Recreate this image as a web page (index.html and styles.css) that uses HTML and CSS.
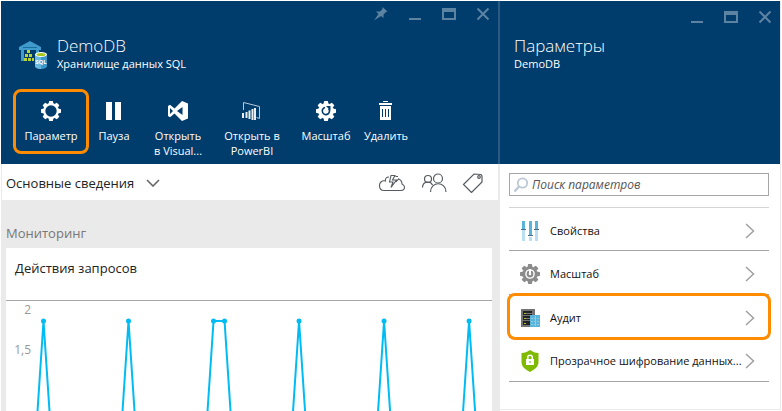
FILE: index.html
```html
<!DOCTYPE html>
<html lang="ru">
<head>
<meta charset="utf-8">
<title>DemoDB</title>
<link rel="stylesheet" href="styles.css">
</head>
<body>
<main class="portal">
  <section class="blade blade-main">
    <header class="blade-header">
      <div class="window-controls">
        <button type="button" aria-label="Закрепить"><svg width="14" height="14" viewBox="0 0 14 14"><path fill="currentColor" d="M8.500 0 13.500 4.500 12 5 9.500 7.500 9.500 11 7 9 0 13.500 4.500 7 2 4.500 6 4.500 8.500 2z"/></svg></button>
        <button type="button" aria-label="Свернуть"><svg width="14" height="14" viewBox="0 0 14 14"><path fill="currentColor" d="M1 11h12v2H1z"/></svg></button>
        <button type="button" aria-label="Развернуть"><svg width="14" height="14" viewBox="0 0 14 14"><path fill="currentColor" fill-rule="evenodd" d="M0 1h14v12H0zM2 5v6h10V5z"/></svg></button>
        <button type="button" aria-label="Закрыть"><svg width="14" height="14" viewBox="0 0 14 14"><path stroke="currentColor" stroke-width="2" d="M1.500 1.500l11 11m0-11l-11 11"/></svg></button>
      </div>
      <div class="heading">
        <svg class="heading-icon" width="30" height="30" viewBox="0 0 30 30">
          <path fill="#3e9bcb" d="M1 7 12 1 23 7v3H1z"/>
          <path fill="#3e9bcb" d="M3 9h3v12H3zM18 9h3v4h-3z"/>
          <path fill="#1b6fa0" d="M5 7h14v1H5z"/>
          <path fill="#b8d432" d="M9 10h3v3H9zM7 14h3v3H7zM11 14h3v3h-3zM6 18h3v3H6zM10 18h3v3h-3zM14 18h2v3h-2z"/>
          <path fill="#3b98c9" d="M17 14v12c0 4 12 4 12 0V14z"/>
          <path fill="#6bb8de" d="M17 15v11c0 2 3 3 6 3V17z"/>
          <ellipse cx="23" cy="14.500" rx="6" ry="2.500" fill="#fff"/>
          <ellipse cx="23" cy="14.500" rx="4.600" ry="1.600" fill="#a4c614"/>
          <text class="sql-label" x="23" y="24" text-anchor="middle">SQL</text>
        </svg>
        <div>
          <h1>DemoDB</h1>
          <p>Хранилище данных SQL</p>
        </div>
      </div>
      <nav class="toolbar">
        <button type="button" class="tool tool-selected">
          <svg width="22" height="22" viewBox="-11 -11 22 22"><g fill="#fff"><circle r="6.800" fill="none" stroke="#fff" stroke-width="2.200"/><path id="teeth" d="M-1.800-10h3.600l.700 3h-5zM-1.800 10h3.600l.700-3h-5z"/><use href="#teeth" transform="rotate(45)"/><use href="#teeth" transform="rotate(90)"/><use href="#teeth" transform="rotate(135)"/></g></svg>
          <span>Параметр</span>
        </button>
        <button type="button" class="tool">
          <svg width="22" height="22" viewBox="0 0 22 22"><path fill="#fff" d="M3 2h6v18H3zM12 2h6v18h-6z"/></svg>
          <span>Пауза</span>
        </button>
        <button type="button" class="tool">
          <svg width="22" height="22" viewBox="0 0 22 22"><path fill="#fff" fill-rule="evenodd" d="M15 1l6 2.500v15L15 21 7.500 13.600 3 17.200 1 16V6l2-1.200 4.500 3.600zM3 8v6l3-3zM15.500 7l-5.500 4 5.500 4z"/></svg>
          <span>Открыть<br>в Visual...</span>
        </button>
        <button type="button" class="tool">
          <svg width="22" height="22" viewBox="0 0 22 22"><path fill="none" stroke="#b8c9d8" d="M2.500 10V2.500L18.500 6.500V18.500l-3-1"/><path fill="#e8eef3" d="M1 13h2v5H1zM4.500 12h2v6h-2zM7.500 10.500h2V19h-2zM10.500 9h2v11h-2zM13 8h2v12h-2z"/></svg>
          <span>Открыть в<br>PowerBI</span>
        </button>
        <button type="button" class="tool">
          <svg width="22" height="22" viewBox="-11 -11 22 22"><g fill="#fff"><circle r="7.800"/><use href="#teeth"/><use href="#teeth" transform="rotate(45)"/><use href="#teeth" transform="rotate(90)"/><use href="#teeth" transform="rotate(135)"/></g><path fill="none" stroke="#003c6c" stroke-width="1.600" d="M-1-3.500A3.600 3.600 0 1 0 2.500-2.500"/><path fill="#003c6c" d="M0-5h4.500v4.500z"/></svg>
          <span>Масштаб</span>
        </button>
        <button type="button" class="tool">
          <svg width="22" height="22" viewBox="0 0 22 22"><path fill="#fff" fill-rule="evenodd" d="M8 1h5v1H8zM4 3h13v2H4zM5 6h11v14H5zM7 9v8h1V9zM10 9v8h1V9zM13 9v8h1V9z"/></svg>
          <span>Удалить</span>
        </button>
      </nav>
    </header>
    <div class="essentials">
      <button type="button" class="essentials-toggle">Основные сведения
        <svg width="14" height="8" viewBox="0 0 14 8"><path fill="none" stroke="#666" stroke-width="1.600" d="M1 1l6 6 6-6"/></svg>
      </button>
      <div class="essentials-actions">
        <button type="button" aria-label="Быстрый запуск"><svg width="28" height="20" viewBox="0 0 28 20"><g fill="none" stroke="#555b61" stroke-width="1.100"><path d="M11 4C8 4 7 6 7.500 8 4 7 1.500 9.500 1.500 12.500S3 17.500 6 17.500H23c2.500 0 3.500-1.500 3.500-3.500S25 11.500 24 11c0-3-1.500-4.500-4-5"/><path d="M13 2.500h4L14.500 7h4l-5.500 7.500 2-5.500h-3.500zM20 3.500h-2.500M18 9l3-3.500"/></g></svg></button>
        <button type="button" aria-label="Пользователи"><svg width="26" height="20" viewBox="0 0 26 20"><g fill="none" stroke="#555b61" stroke-width="1.200"><circle cx="7" cy="6" r="3.500"/><circle cx="17" cy="5.500" r="4.500"/><path d="M1.500 14.500c0-6.500 8-7 10-2.500M9.500 19c0-11 15.500-11 15.500 0"/></g></svg></button>
        <button type="button" aria-label="Теги"><svg width="22" height="20" viewBox="0 0 22 20"><g fill="none" stroke="#555b61" stroke-width="1.200"><path d="M1.500 11.500 12 1l7 .500 1 1.500V9L9.500 19.500z"/><circle cx="17" cy="4" r="1.300"/></g></svg></button>
      </div>
    </div>
    <div class="lens">
      <h2>Мониторинг</h2>
      <article class="tile">
        <h3>Действия запросов</h3>
        <div class="chart">
          <div class="axis"><span>2</span><span>1,5</span></div>
          <svg class="plot" viewBox="0 0 456 110" preserveAspectRatio="xMinYMin slice">
            <g fill="none" stroke="#00bcf2" stroke-width="2">
              <path d="M1.500 110 7.500 20 13.500 110M86.500 110 92.500 20 98.500 110M171.500 110 177.500 20H188.500L194.500 110M257 110 263 20 269 110M342 110 348 20 354 110M427 110 433 20 439 110"/>
            </g>
            <g fill="#00bcf2"><circle cx="7.500" cy="20" r="2.500"/><circle cx="92.500" cy="20" r="2.500"/><circle cx="177.500" cy="20" r="2.500"/><circle cx="188.500" cy="20" r="2.500"/><circle cx="263" cy="20" r="2.500"/><circle cx="348" cy="20" r="2.500"/><circle cx="433" cy="20" r="2.500"/></g>
          </svg>
        </div>
      </article>
    </div>
  </section>
  <section class="blade blade-settings">
    <header class="blade-header">
      <div class="window-controls">
        <button type="button" aria-label="Свернуть"><svg width="14" height="14" viewBox="0 0 14 14"><path fill="currentColor" d="M1 11h12v2H1z"/></svg></button>
        <button type="button" aria-label="Развернуть"><svg width="14" height="14" viewBox="0 0 14 14"><path fill="currentColor" fill-rule="evenodd" d="M0 1h14v12H0zM2 5v6h10V5z"/></svg></button>
        <button type="button" aria-label="Закрыть"><svg width="14" height="14" viewBox="0 0 14 14"><path stroke="currentColor" stroke-width="2" d="M1.500 1.500l11 11m0-11l-11 11"/></svg></button>
      </div>
      <div class="heading">
        <div>
          <h1>Параметры</h1>
          <p>DemoDB</p>
        </div>
      </div>
    </header>
    <div class="settings">
      <label class="search">
        <svg width="16" height="16" viewBox="0 0 16 16"><g fill="none" stroke="#bcc8d6"><circle cx="9.500" cy="6" r="4.700" stroke-width="1.800"/><path stroke-width="2.400" d="M6 9.500l-4.500 5"/></g></svg>
        <input type="search" placeholder="Поиск параметров" aria-label="Поиск параметров">
      </label>
      <ul class="settings-list">
        <li><a href="#properties">
          <svg width="22" height="22" viewBox="0 0 22 22"><path fill="#59b4d9" d="M3 1h3v8H3zM10 1h3v14h-3zM16 1h3v8h-3z"/><path fill="#b9e0f2" d="M3 10h3v11H3zM10 17h3v4h-3zM16 10h3v11h-3z"/><path fill="#4a6f85" d="M2 9h5v1H2zM9 15h5v1H9zM15 9h5v1h-5z"/></svg>
          <span>Свойства</span>
          <svg class="chevron" width="10" height="16" viewBox="0 0 10 16"><path d="M1 1l7.500 7L1 15"/></svg></a></li>
        <li><a href="#scale">
          <svg width="22" height="22" viewBox="-11 -11 22 22"><g fill="#8b8b8b"><circle r="7.600"/><use href="#teeth"/><use href="#teeth" transform="rotate(45)"/><use href="#teeth" transform="rotate(90)"/><use href="#teeth" transform="rotate(135)"/></g><circle r="4.800" fill="#fff"/><circle r="3.400" fill="#8b8b8b"/><path stroke="#fff" stroke-width="2" d="M0-5V0"/><circle r="1.300" fill="#fff"/></svg>
          <span>Масштаб</span>
          <svg class="chevron" width="10" height="16" viewBox="0 0 10 16"><path d="M1 1l7.500 7L1 15"/></svg></a></li>
        <li class="selected"><a href="#audit">
          <svg width="22" height="22" viewBox="0 0 22 22"><path fill="#737373" d="M2 2h14v18H2z"/><path fill="#222" d="M4 4h9v4H4zM4 9h9v4H4zM4 14h9v4H4z"/><path fill="#a6c81c" d="M5 6h2v1H5zM5 11h2v1H5zM5 16h2v1H5z"/><path fill="#777" d="M7 6h6v1H7zM7 11h6v1H7z"/><path fill="#59b4d9" d="M11 8h10v12H11z"/><path stroke="#8fcbe6" stroke-dasharray="2 1" d="M12 11.500h8M12 14.500h8M12 17.500h8M16.500 9v10"/></svg>
          <span>Аудит</span>
          <svg class="chevron" width="10" height="16" viewBox="0 0 10 16"><path d="M1 1l7.500 7L1 15"/></svg></a></li>
        <li><a href="#encryption">
          <svg width="22" height="22" viewBox="0 0 22 22"><path fill="#7fba00" d="M11 0c3 2 5 3 8.500 3v9c0 5-4 7.500-8.500 10C6.500 19.500 2.500 17 2.500 12V3C6 3 8 2 11 0z"/><path fill="#fff" d="M7 9h8v6H7z"/><path fill="none" stroke="#fff" stroke-width="1.500" d="M8.800 9.500V7c0-2.500 4.400-2.500 4.400 0v2.500"/><path fill="#7fba00" d="M10.500 11h1v2h-1z"/></svg>
          <span>Прозрачное шифрование данных...</span>
          <svg class="chevron" width="10" height="16" viewBox="0 0 10 16"><path d="M1 1l7.500 7L1 15"/></svg></a></li>
      </ul>
    </div>
  </section>
</main>
</body>
</html>
```
FILE: styles.css
```css
* {
  box-sizing: border-box;
}

body {
  margin: 0;
  background: #fff;
  color: #222;
  font-family: "Open Sans", "Noto Sans", sans-serif;
  font-size: 13px;
  line-height: 18px;
}

h1, h2, h3, p, ul {
  margin: 0;
  padding: 0;
  font-weight: 400;
}

button {
  padding: 0;
  border: 0;
  background: none;
  color: inherit;
  font: inherit;
}

svg {
  display: block;
  flex: none;
}

.portal {
  display: flex;
  height: 100vh;
  padding: 1px 1px 0;
  overflow: hidden;
}

.blade {
  display: flex;
  flex-direction: column;
}

.blade-main {
  flex: 499 1 0;
  min-width: 0;
  border-right: 2px solid #eaeaea;
  background: #eaeaea;
}

.blade-settings {
  flex: 281 1 0;
  min-width: 0;
  margin-bottom: 1px;
  border: solid #eaeaea;
  border-width: 0 1px 1px 0;
}

.blade-header {
  height: 163px;
  flex: none;
  background: #003c6c;
  color: #fff;
}

.blade-main .blade-header {
  margin-right: -2px;
  border-right: 2px solid #295a83;
}

.blade-settings .blade-header {
  padding-top: 3px;
}

.window-controls {
  display: flex;
  justify-content: flex-end;
  align-items: flex-start;
  gap: 20px;
  height: 32px;
  padding: 6px 8px 0;
  color: #5d83a3;
}

.blade-settings .window-controls {
  height: 29px;
}

.heading {
  display: flex;
  gap: 9px;
  padding: 2px 17px 0;
}

.blade-settings .heading {
  padding-left: 14px;
}

.heading-icon {
  margin-top: 5px;
}

.heading h1 {
  font-size: 17px;
  font-weight: 300;
  line-height: 22px;
}

.heading p {
  font-size: 11px;
  line-height: 14px;
}

.sql-label {
  fill: #fff;
  font-size: 6px;
  font-weight: 700;
}

.toolbar {
  display: grid;
  grid-template-columns: 76px 50px 78px 70px 78px 42px;
  margin: 18px 0 0 12px;
}

.tool {
  display: flex;
  flex-direction: column;
  align-items: center;
  gap: 6px;
  height: 65px;
  padding-top: 11px;
  font-size: 11px;
  line-height: 15px;
  white-space: nowrap;
}

.tool-selected {
  padding-top: 8px;
  border: 3px solid #ff8c00;
  border-radius: 8px;
}

.essentials {
  display: flex;
  justify-content: space-between;
  align-items: center;
  height: 36px;
  padding: 2px 14px 0 4px;
  flex: none;
  border-left: 1px solid #eaeaea;
  background: #fff;
}

.essentials-toggle {
  display: flex;
  align-items: center;
  gap: 12px;
}

.essentials-actions {
  display: flex;
  gap: 15px;
}

.lens {
  display: flex;
  flex-direction: column;
  flex: 1;
  padding: 24px 6px 0 5px;
}

.lens h2 {
  margin-bottom: 6px;
  color: #777;
  font-size: 13px;
}

.tile {
  flex: 1;
  background: #fff;
}

.tile h3 {
  height: 53px;
  padding: 11px 9px;
  border-bottom: 1px solid #a6a6a6;
  font-size: 13px;
}

.chart {
  display: flex;
  height: 110px;
}

.axis {
  display: flex;
  flex-direction: column;
  gap: 22px;
  width: 30px;
  padding-right: 5px;
  color: #999;
  font-size: 12px;
  text-align: right;
}

.plot {
  flex: 1;
  min-width: 0;
  height: 110px;
}

.settings {
  padding: 9px 11px 0 9px;
}

.search {
  display: flex;
  align-items: center;
  gap: 3px;
  height: 23px;
  padding: 0 3px;
  border: 1px solid #a6a6a6;
}

.search input {
  flex: 1;
  min-width: 0;
  padding: 0;
  border: 0;
  outline: 0;
  background: none;
  font: italic 12px/18px "Open Sans", "Noto Sans", sans-serif;
}

.search input::placeholder {
  color: #555;
}

.settings-list {
  margin-top: 11px;
  border-top: 1px solid #d5d5d5;
  list-style: none;
}

.settings-list li {
  position: relative;
  border-bottom: 1px solid #a6a6a6;
}

.settings-list li:nth-child(even) {
  padding-bottom: 1px;
}

.settings-list a {
  display: flex;
  align-items: center;
  gap: 9px;
  height: 42px;
  padding: 4px 14px 0 10px;
  color: #111;
  font-size: 11px;
  text-decoration: none;
}

.settings-list span {
  flex: 1;
  min-width: 0;
  white-space: nowrap;
}

.settings-list .selected::after {
  content: "";
  position: absolute;
  inset: -2px -2px -3px;
  border: 3px solid #ff8c00;
  border-radius: 8px;
  pointer-events: none;
}

.chevron path {
  fill: none;
  stroke: #a0a0a0;
  stroke-width: 1.5;
}
```
